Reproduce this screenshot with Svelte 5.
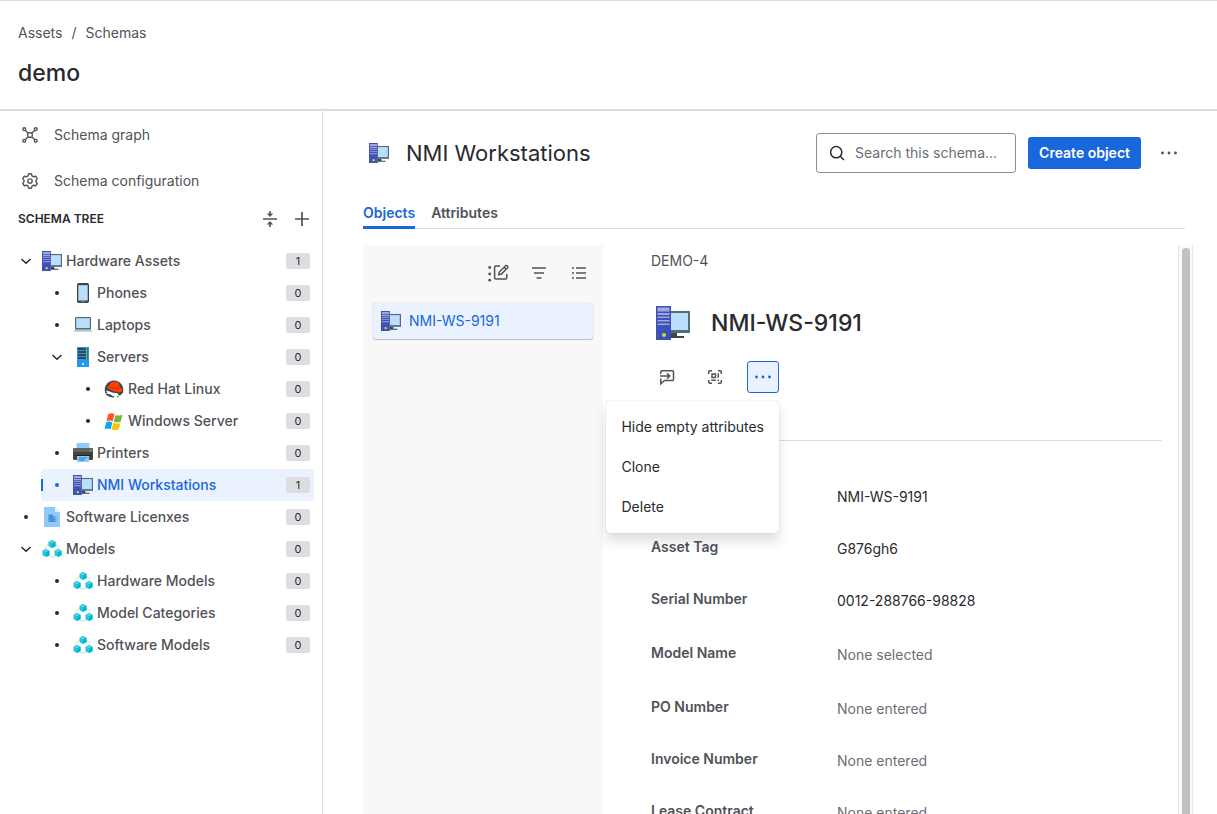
<script>
	const tree = [
		{ name: 'Hardware Assets', level: 0, icon: 'computer', count: 1, open: true },
		{ name: 'Phones', level: 1, icon: 'phone', count: 0 },
		{ name: 'Laptops', level: 1, icon: 'laptop', count: 0 },
		{ name: 'Servers', level: 1, icon: 'server', count: 0, open: true },
		{ name: 'Red Hat Linux', level: 2, icon: 'redhat', count: 0 },
		{ name: 'Windows Server', level: 2, icon: 'windows', count: 0 },
		{ name: 'Printers', level: 1, icon: 'printer', count: 0 },
		{ name: 'NMI Workstations', level: 1, icon: 'computer', count: 1 },
		{ name: 'Software Licenxes', level: 0, icon: 'document', count: 0 },
		{ name: 'Models', level: 0, icon: 'cubes', count: 0, open: true },
		{ name: 'Hardware Models', level: 1, icon: 'cubes', count: 0 },
		{ name: 'Model Categories', level: 1, icon: 'cubes', count: 0 },
		{ name: 'Software Models', level: 1, icon: 'cubes', count: 0 }
	];

	const attributes = [
		{ label: 'Name', value: 'NMI-WS-9191' },
		{ label: 'Asset Tag', value: 'G876gh6' },
		{ label: 'Serial Number', value: '0012-288766-98828' },
		{ label: 'Model Name', empty: 'None selected', reference: true },
		{ label: 'PO Number', empty: 'None entered' },
		{ label: 'Invoice Number', empty: 'None entered' },
		{ label: 'Lease Contract', empty: 'None entered' }
	];

	const menuItems = ['Hide empty attributes', 'Clone', 'Delete'];

	let selected = $state('NMI Workstations');
	let menuOpen = $state(true);
	let tab = $state('Objects');
	let search = $state('');
</script>

{#snippet computer()}
	<svg class="picture" viewBox="0 0 34 34" aria-hidden="true">
		<path fill="#546e7a" d="M14 5h20v22H14z" />
		<path fill="#bbdefb" d="M14 7h18v17H14z" />
		<path fill="#37474f" d="M15 27h6v3h7v2H15z" />
		<path fill="#3f51b5" d="M0 0h15v34H0z" />
		<path fill="#9fa8da" d="M1.500 1.500h12v4h-12zM1.500 7h12v2h-12zM1.500 10.500h12v1.500h-12zM1.500 14h12v1.500h-12zM1.500 17.500h12v1.500h-12z" />
		<circle cx="8" cy="29" r="2" fill="#cddc39" />
	</svg>
{/snippet}

{#snippet dots()}
	<svg class="glyph" viewBox="0 0 24 24" aria-hidden="true">
		<g fill="currentColor">
			<circle cx="4.200" cy="12" r="1.700" />
			<circle cx="12" cy="12" r="1.700" />
			<circle cx="19.800" cy="12" r="1.700" />
		</g>
	</svg>
{/snippet}

{#snippet cube(x, y)}
	<g transform="translate({x} {y})">
		<path fill="#26c6da" d="M0 -4 3.500 -2.300V2.200L0 4 -3.500 2.200V-2.300z" />
		<path fill="#4dd0e1" d="M0 -4 3.500 -2.300 0 -0.600 -3.500 -2.300z" />
		<path fill="#00b8d0" d="M0 -0.600 3.500 -2.300V2.200L0 4z" />
	</g>
{/snippet}

{#snippet picture(kind)}
	{#if kind === 'computer'}
		{@render computer()}
	{:else}
		<svg class="picture" viewBox="0 0 20 20" aria-hidden="true">
			{#if kind === 'phone'}
				<rect x="4" width="12" height="20" rx="1.800" fill="#37474f" />
				<path fill="#bbdefb" d="M5.300 2.200h9.400v15.300H5.300z" />
				<path stroke="#78909c" d="M8 18.700h4" />
			{:else if kind === 'laptop'}
				<rect x="2" y="2" width="16" height="13" rx="1" fill="#546e7a" />
				<path fill="#bbdefb" d="M3.200 3.200h13.600v9.800H3.200z" />
				<path fill="#cfd8dc" d="M0 15.300h20L18.500 17h-17z" />
				<path fill="#90a4ae" d="M2 14h16v1.500H2z" />
				<path fill="#b0bec5" d="M7.500 15.300h5v.8h-5z" />
			{:else if kind === 'server'}
				<path fill="#2196f3" d="M4 0h12v20H4z" />
				<path fill="#37474f" d="M5 1h10v2H5zM5 4h10v2H5zM5 7h10v2H5zM5 10h10v2H5z" />
				<path fill="#76c22b" d="M13 1h1.300v2H13zM13 4h1.300v2H13zM13 7h1.300v2H13zM13 10h1.300v2H13z" />
				<circle cx="10" cy="17" r="1.200" fill="#bbdefb" />
			{:else if kind === 'redhat'}
				<path fill="#37474f" d="M1.500 14.500A9.300 9.300 0 1 1 18.800 14L16 16.500 11 14z" />
				<path fill="#ff3d00" d="M5.500 6.500C6 4 7 2.300 8.500 2.700c1 .3 1.500.6 2.500.1C12.500 2 14.500 2.800 15 4.500l.8 3.500c2 .8 3 2.200 2.700 3.500-.5 2-4 2.200-8 .9C6 11 3 9.700 3.300 8 3.500 6.700 4.300 6.300 5.500 6.500z" />
				<path fill="#bf2600" d="M5.400 7.200c2 2 6 3 9.500 2.700l.1-.6c-3 .5-7-.5-9.500-2.400z" />
				<path fill="#fff" d="M2 11.500c3 .5 4.500 1.700 7.500 2.200 1.500.3 2.700.1 4 .3l.8 2.500-2 2.500-4.300-1.500-3.600-1.500z" />
				<path fill="#37474f" d="M1.500 14.800 6 15.200l3 2 1.500-.2-.5 1.500C6 18.500 3 17 1.500 14.800zM13 17.300l2.500-1-2 2.200z" />
			{:else if kind === 'windows'}
				<path fill="#ff5722" d="M4.200 3.100C6.500 1.800 8.700 2 10.500 3L8.700 10.200C6.800 9.300 4.600 9.200 2.500 10.100z" />
				<path fill="#7cb342" d="M11.500 4c2 .9 4.500.8 7-.2l-1.800 7c-2.500 1-4.800 1-7-.2z" />
				<path fill="#03a9f4" d="M2.200 11.200c2-.9 4.300-.8 6.200.2l-1.800 6.900c-2-1-4-1.100-6-.2z" />
				<path fill="#ffc107" d="M9.400 11.800c2 1 4.600 1 7 .1l-1.800 6.500c-2.400 1-4.900 1-7-.1z" />
			{:else if kind === 'printer'}
				<path fill="#90caf9" d="M3.500 0h13v7h-13z" />
				<rect y="5" width="20" height="12" rx="1.500" fill="#424242" />
				<path fill="#616161" d="M1.500 5h17Q20 5 20 6.500V9H0V6.500Q0 5 1.500 5z" />
				<circle cx="17.500" cy="7.500" r=".8" fill="#64dd17" />
				<path fill="#212121" d="M2.500 12h15v1h-15z" />
				<path fill="#90caf9" d="M4 13h12v6H4z" />
				<path stroke="#1976d2" d="M6 15h8M6 17h5.500" />
			{:else if kind === 'document'}
				<path fill="#90caf9" d="M2 0h11l5 5v15H2z" />
				<path fill="#e1f5fe" d="M13 0l5 5h-5z" />
				<path fill="#4a90d9" d="M6.500 7.500h4.500v2h3.500v1h-2v1.500h2v1h-2v.8h2v1.200h-8z" />
			{:else}
				<circle cx="10" cy="11" r="7" fill="none" stroke="#cfd8dc" />
				{@render cube(10, 5)}
				{@render cube(4, 14)}
				{@render cube(16, 14)}
			{/if}
		</svg>
	{/if}
{/snippet}

<div class="app">
	<header class="page-header">
		<nav class="breadcrumbs" aria-label="Breadcrumbs">
			<a href="#assets">Assets</a>
			<span>/</span>
			<a href="#schemas">Schemas</a>
		</nav>
		<h1>demo</h1>
	</header>

	<div class="body">
		<aside class="sidebar">
			<nav class="links">
				<a href="#graph">
					<svg class="glyph" viewBox="2 2 20 20" aria-hidden="true">
						<g fill="none" stroke="currentColor" stroke-width="1.700">
							<rect x="9.200" y="9.200" width="5.600" height="5.600" rx="1.500" />
							<circle cx="4.800" cy="4.800" r="1.800" />
							<circle cx="19.200" cy="4.800" r="1.800" />
							<circle cx="4.800" cy="19.200" r="1.800" />
							<circle cx="19.200" cy="19.200" r="1.800" />
							<path d="M6.300 6.300l3.200 3.200M17.700 6.300l-3.200 3.200M6.300 17.700l3.200-3.200M17.700 17.700l-3.200-3.200" />
						</g>
					</svg>
					Schema graph
				</a>
				<a href="#configuration">
					<svg class="glyph" viewBox="1 1 22 22" aria-hidden="true">
						<g fill="none" stroke="currentColor" stroke-width="1.900" stroke-linejoin="round">
							<path d="M10.200 2h3.600l1 3 2.200 1.200 3.100-.7 1.800 3.200L19.800 12l2.100 3.300-1.800 3.200-3.100-.7-2.200 1.200-1 3h-3.600l-1-3L7 17.800l-3.100.7-1.800-3.200L4.200 12 2.100 8.700l1.800-3.200 3.100.7L9.200 5z" />
							<circle cx="12" cy="12" r="3" />
						</g>
					</svg>
					Schema configuration
				</a>
			</nav>

			<div class="tree-head">
				<h2>Schema tree</h2>
				<button class="icon-button" aria-label="Collapse all">
					<svg class="glyph" viewBox="0 0 20 20" aria-hidden="true">
						<path fill="none" stroke="currentColor" stroke-width="1.600" d="M3 10h14M10 2v4M10 18v-4" />
						<path fill="currentColor" d="M6.800 4.500h6.400L10 8zM6.800 15.500h6.400L10 12z" />
					</svg>
				</button>
				<button class="icon-button" aria-label="Create object type">
					<svg class="glyph" viewBox="0 0 20 20" aria-hidden="true">
						<path stroke="currentColor" stroke-width="1.700" d="M3 10h14M10 3v14" />
					</svg>
				</button>
			</div>

			<ul class="tree">
				{#each tree as node}
					<li class="level-{node.level}">
						<button class="node" class:selected={selected === node.name} onclick={() => (selected = node.name)}>
							<span class="toggle">
								{#if node.open}
									<svg class="chevron" viewBox="0 0 12 12" aria-hidden="true">
										<path fill="none" stroke="currentColor" stroke-width="1.500" d="M1.500 4 6 8.300 10.500 4" />
									</svg>
								{:else}
									<span class="bullet"></span>
								{/if}
							</span>
							{@render picture(node.icon)}
							<span class="name">{node.name}</span>
							<span class="count">{node.count}</span>
						</button>
					</li>
				{/each}
			</ul>
		</aside>

		<main>
			<div class="title-row">
				<span class="title-icon">{@render computer()}</span>
				<h2>NMI Workstations</h2>
				<label class="search">
					<svg class="glyph" viewBox="0 0 16 16" aria-hidden="true">
						<g fill="none" stroke="currentColor" stroke-width="1.500">
							<circle cx="7.200" cy="7.200" r="5.600" />
							<path d="M11.200 11.200 15 15" />
						</g>
					</svg>
					<input type="text" placeholder="Search this schema..." aria-label="Search this schema" bind:value={search} />
				</label>
				<button class="primary">Create object</button>
				<button class="icon-button" aria-label="More actions">{@render dots()}</button>
			</div>

			<div class="tabs" role="tablist">
				{#each ['Objects', 'Attributes'] as name}
					<button role="tab" aria-selected={tab === name} class:active={tab === name} onclick={() => (tab = name)}>
						{name}
					</button>
				{/each}
			</div>

			<div class="workspace">
				<section class="object-list">
					<div class="toolbar">
						<button class="icon-button" aria-label="Bulk edit">
							<svg class="wide-glyph" viewBox="0 0 22 18" aria-hidden="true">
								<g fill="currentColor">
									<circle cx="1.700" cy="3.500" r="1.400" />
									<circle cx="1.700" cy="10" r="1.400" />
									<circle cx="1.700" cy="16.200" r="1.400" />
								</g>
								<g fill="none" stroke="currentColor" stroke-width="1.500">
									<path d="M12 2H7.800Q6.600 2 6.600 3.200V13.800Q6.600 15 7.800 15H17.600Q18.800 15 18.800 13.800V10" />
									<path d="M10.800 10.700 11.300 8 17.600 1.700Q18.500 1 19.500 2 20.300 3 19.600 3.800L13.500 10z" />
									<path d="M16.100 3.300l2 2" />
								</g>
							</svg>
						</button>
						<button class="icon-button" aria-label="Filter">
							<svg class="glyph" viewBox="0 0 16 16" aria-hidden="true">
								<path stroke="currentColor" stroke-width="1.500" d="M1 3h14M3 8h10M5.500 13h5" />
							</svg>
						</button>
						<button class="icon-button" aria-label="List view">
							<svg class="glyph" viewBox="0 0 16 16" aria-hidden="true">
								<path stroke="currentColor" stroke-width="1.500" d="M5 3h10M5 8h10M5 13h10M1 3h2M1 8h2M1 13h2" />
							</svg>
						</button>
					</div>
					<div class="cards">
						<button class="card">
							{@render computer()}
							NMI-WS-9191
						</button>
					</div>
				</section>

				<section class="detail">
					<p class="key">DEMO-4</p>
					<div class="object-title">
						<span class="object-icon">{@render computer()}</span>
						<h2>NMI-WS-9191</h2>
					</div>
					<div class="actions">
						<button class="icon-button" aria-label="Share">
							<svg class="glyph" viewBox="0 0 16 16" aria-hidden="true">
								<g fill="none" stroke="currentColor" stroke-width="1.500">
									<path d="M1.800 5V2.800Q1.800 1.800 2.800 1.800H13.500Q14.500 1.800 14.500 2.800V10.500Q14.500 11.500 13.500 11.500H5.500L1.800 14.800V9.500" />
									<path d="M1 7h9.500M8 4.300 10.700 7 8 9.700" />
								</g>
							</svg>
						</button>
						<button class="icon-button" aria-label="QR code">
							<svg class="glyph" viewBox="0 0 16 16" aria-hidden="true">
								<g fill="none" stroke="currentColor" stroke-width="1.500">
									<path d="M1.700 5V3Q1.700 1.700 3 1.700H5M11 1.700H13Q14.300 1.700 14.300 3V5M14.300 11V13Q14.300 14.300 13 14.300H11M5 14.300H3Q1.700 14.300 1.700 13V11" />
									<path d="M5 5h3.500v3.500H5zM11.300 4.300v4.500M4.300 11.300h4.500M10.500 11.300h1.600" />
								</g>
							</svg>
						</button>
						<div class="more">
							<button
								class="icon-button"
								class:pressed={menuOpen}
								aria-label="Object actions"
								aria-expanded={menuOpen}
								onclick={() => (menuOpen = !menuOpen)}
							>
								{@render dots()}
							</button>
							{#if menuOpen}
								<div class="menu" role="menu">
									{#each menuItems as item}
										<button role="menuitem">{item}</button>
									{/each}
								</div>
							{/if}
						</div>
					</div>
					<dl class="attributes">
						{#each attributes as attribute}
							<div class="attribute" class:reference={attribute.reference}>
								<dt>{attribute.label}</dt>
								<dd class:empty={attribute.empty}>{attribute.value ?? attribute.empty}</dd>
							</div>
						{/each}
					</dl>
				</section>

				<div class="scroll-track"><div class="scroll-thumb"></div></div>
			</div>
		</main>
	</div>
</div>

<style>
	:global(body) {
		margin: 0;
		background: #fff;
	}

	.app {
		height: 100vh;
		box-sizing: border-box;
		display: flex;
		flex-direction: column;
		overflow: hidden;
		border-top: 1px solid #dcdcde;
		color: #292a2e;
		font-family: Inter, 'Liberation Sans', sans-serif;
		font-size: 14px;
		line-height: 20px;
	}

	h1,
	h2,
	p,
	ul,
	dl,
	dd {
		margin: 0;
		padding: 0;
	}

	button,
	input {
		border: 0;
		padding: 0;
		background: none;
		color: inherit;
		font: inherit;
	}

	button {
		cursor: pointer;
	}

	a {
		color: #505258;
		text-decoration: none;
	}

	.picture {
		display: block;
		flex: none;
		width: 20px;
		height: 20px;
	}

	.glyph {
		display: block;
		flex: none;
		width: 16px;
		height: 16px;
	}

	.icon-button {
		display: flex;
		align-items: center;
		justify-content: center;
		box-sizing: border-box;
		flex: none;
		width: 32px;
		height: 32px;
		border-radius: 3px;
		color: #505258;
	}

	.page-header {
		flex: none;
		padding: 22px 18px;
		border-bottom: 2px solid #dcdcde;
	}

	.breadcrumbs {
		display: flex;
		gap: 9px;
		margin-bottom: 16px;
		color: #505258;
	}

	h1 {
		font-size: 23px;
		font-weight: 500;
		line-height: 28px;
	}

	.body {
		display: flex;
		flex: 1;
		min-height: 0;
	}

	.sidebar {
		flex: none;
		width: 322px;
		padding-top: 1px;
		border-right: 1px solid #dcdcde;
	}

	.links a {
		display: flex;
		align-items: center;
		gap: 16px;
		height: 46px;
		padding-left: 22px;
	}

	.tree-head {
		display: flex;
		align-items: center;
		height: 30px;
		padding: 0 4px 0 18px;
	}

	.tree-head h2 {
		flex: 1;
		font-size: 12px;
		font-weight: 600;
		text-transform: uppercase;
	}

	.tree-head .glyph,
	.title-row .icon-button .glyph,
	.more .glyph {
		width: 20px;
		height: 20px;
	}

	.tree {
		padding: 11px 8px 0 10px;
		list-style: none;
	}

	.level-1 {
		margin-left: 31px;
	}

	.level-2 {
		margin-left: 62px;
	}

	.node {
		position: relative;
		display: flex;
		align-items: center;
		width: 100%;
		height: 32px;
		padding-right: 4px;
		border-radius: 3px;
		color: #505258;
		font-weight: 500;
		text-align: left;
	}

	.node.selected {
		background: #e9f2fe;
		color: #1868db;
	}

	.node.selected::before {
		content: '';
		position: absolute;
		top: 10px;
		left: 0;
		width: 2px;
		height: 12px;
		background: #1868db;
	}

	.toggle {
		display: flex;
		align-items: center;
		justify-content: center;
		width: 32px;
		color: #292a2e;
	}

	.selected .toggle {
		color: #1868db;
	}

	.chevron {
		width: 12px;
		height: 12px;
	}

	.bullet {
		width: 4px;
		height: 4px;
		border-radius: 50%;
		background: currentColor;
	}

	.name {
		flex: 1;
		margin-left: 4px;
	}

	.count {
		width: 24px;
		border-radius: 2px;
		background: #dddee1;
		color: #292a2e;
		font-size: 11px;
		font-weight: 400;
		line-height: 16px;
		text-align: center;
	}

	main {
		display: flex;
		flex: 1;
		flex-direction: column;
		min-width: 0;
		padding: 22px 24px 0 40px;
	}

	.title-row {
		display: flex;
		align-items: center;
		gap: 12px;
		margin-right: 8px;
	}

	.title-icon {
		display: flex;
		justify-content: center;
		width: 31px;
	}

	.title-row h2 {
		flex: 1;
		font-size: 22px;
		font-weight: 400;
		line-height: 28px;
	}

	.search {
		display: flex;
		align-items: center;
		gap: 10px;
		box-sizing: border-box;
		width: 200px;
		height: 40px;
		padding: 0 12px;
		border: 1px solid #8c8f97;
		border-radius: 3px;
	}

	.search input {
		flex: 1;
		min-width: 0;
		outline: none;
	}

	.search input::placeholder {
		color: #6b6e76;
		opacity: 1;
	}

	.primary {
		height: 32px;
		padding: 0 11px;
		border-radius: 3px;
		background: #1868db;
		color: #fff;
		font-weight: 600;
	}

	.tabs {
		display: flex;
		gap: 16px;
		height: 32px;
		margin: 24px 8px 0 0;
		box-shadow: inset 0 -1px #dcdcde;
	}

	.tabs button {
		padding-top: 2px;
		border-bottom: 3px solid transparent;
		color: #505258;
		font-weight: 600;
	}

	.tabs button.active {
		border-color: #1868db;
		color: #1868db;
	}

	.workspace {
		display: flex;
		flex: 1;
		min-height: 0;
		margin-top: 16px;
	}

	.object-list {
		box-sizing: border-box;
		flex: none;
		width: 240px;
		padding: 12px 8px;
		border-radius: 4px 4px 0 0;
		background: #f8f8f8;
	}

	.toolbar {
		display: flex;
		justify-content: flex-end;
		gap: 8px;
		margin-bottom: 12px;
	}

	.wide-glyph {
		width: 22px;
		height: 18px;
	}

	.cards {
		padding: 2px;
	}

	.card {
		display: flex;
		align-items: center;
		gap: 8px;
		width: 100%;
		height: 36px;
		padding: 0 8px;
		border-radius: 3px;
		background: #e9f2fe;
		box-shadow: 0 1px 1px rgba(30, 31, 33, 0.25), 0 0 1px rgba(30, 31, 33, 0.31);
		color: #1868db;
	}

	.detail {
		flex: 1;
		min-width: 0;
		padding: 6px 16px 0 48px;
	}

	.key {
		color: #505258;
	}

	.object-title {
		display: flex;
		align-items: center;
		gap: 16px;
		height: 40px;
		margin-top: 32px;
	}

	.object-icon {
		display: flex;
		justify-content: center;
		width: 44px;
	}

	.object-icon :global(.picture) {
		width: 34px;
		height: 34px;
	}

	.object-title h2 {
		font-size: 23px;
		font-weight: 500;
		line-height: 28px;
	}

	.actions {
		display: flex;
		gap: 16px;
		margin-top: 18px;
		padding-bottom: 47px;
		border-bottom: 1px solid #dcdcde;
	}

	.more {
		position: relative;
	}

	.pressed {
		border: 1px solid #1868db;
		background: #e9f2fe;
		color: #1868db;
	}

	.menu {
		position: absolute;
		top: calc(100% + 8px);
		right: 0;
		padding: 6px 0;
		border-radius: 4px;
		background: #fff;
		box-shadow: 0 8px 12px rgba(30, 31, 33, 0.15), 0 0 1px rgba(30, 31, 33, 0.31);
	}

	.menu button {
		display: block;
		width: 100%;
		height: 40px;
		padding: 0 15px;
		text-align: left;
		white-space: nowrap;
	}

	.attributes {
		padding-top: 30px;
	}

	.attribute {
		display: flex;
		align-items: center;
		height: 52px;
	}

	.attribute.reference {
		height: 56px;
	}

	dt {
		flex: none;
		width: 186px;
		padding-bottom: 4px;
		color: #505258;
		font-weight: 600;
	}

	.empty {
		color: #6b6e76;
	}

	.scroll-track {
		flex: none;
		box-sizing: border-box;
		width: 15px;
		padding: 3px 3px 0;
		border: solid #e8e8e8;
		border-width: 0 1px;
		background: #fafafa;
	}

	.scroll-thumb {
		width: 8px;
		height: 100%;
		border-radius: 4px 4px 0 0;
		background: #c1c1c1;
	}
</style>
